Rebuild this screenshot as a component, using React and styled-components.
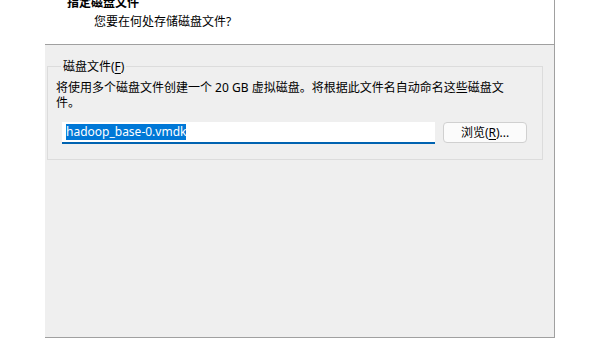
import React from 'react'
import styled, { createGlobalStyle } from 'styled-components'

const GlobalStyle = createGlobalStyle`
  html, body {
    margin: 0;
    padding: 0;
    background: #ffffff;
    overflow: hidden;
  }
  body {
    font-family: "Noto Sans", "Noto Sans CJK SC", sans-serif;
    font-size: 12px;
    color: #000;
  }
`

const App = () => {
  return (
    <>
      <GlobalStyle />
      <Window>
        <Header>
          <Title>指定磁盘文件</Title>
          <Subtitle>您要在何处存储磁盘文件?</Subtitle>
        </Header>
        <Panel>
          <Group>
            <Legend>磁盘文件(<u>F</u>)</Legend>
            <Description>
              将使用多个磁盘文件创建一个 20 GB 虚拟磁盘。将根据此文件名自动命名这些磁盘文件。
            </Description>
            <FileRow>
              <PathInput>
                <Selected>hadoop_base-0.vmdk</Selected>
              </PathInput>
              <Button>浏览(<u>R</u>)...</Button>
            </FileRow>
          </Group>
        </Panel>
      </Window>
    </>
  )
}

export default App

const Window = styled.div`
  margin-left: 45px;
  width: 509px;
  height: 338px;
  border-right: 1px solid #a0a0a0;
  display: flex;
  flex-direction: column;
`

const Header = styled.div`
  height: 45px;
  background: #ffffff;
  border-bottom: 1px solid #a0a0a0;
  padding-left: 22px;
  box-sizing: border-box;
  flex-shrink: 0;
`

const Title = styled.div`
  font-weight: bold;
  line-height: 15px;
  margin-top: -5px;
`

const Subtitle = styled.div`
  line-height: 15px;
  margin-top: 4px;
  padding-left: 27px;
`

const Panel = styled.div`
  flex: 1;
  background: #efefef;
  border-bottom: 1px solid #a0a0a0;
  padding: 14px 11px 0 2px;
`

const Group = styled.fieldset`
  margin: 0;
  padding: 0 15px 15px 8px;
  border: 1px solid #dcdcdc;
  min-inline-size: 0;
`

const Legend = styled.legend`
  margin-left: 5px;
  padding: 0 2px;
  line-height: 15px;

  u {
    text-decoration-thickness: 1px;
    text-underline-offset: 2px;
  }
`

const Description = styled.p`
  margin: 6px 0 0;
  width: 462px;
  line-height: 15px;
`

const FileRow = styled.div`
  display: flex;
  align-items: flex-start;
  gap: 8px;
  margin-top: 12px;
  padding-left: 6px;
`

const PathInput = styled.div`
  width: 374px;
  height: 22px;
  box-sizing: border-box;
  background: #ffffff;
  border-bottom: 2px solid #0063b1;
  padding: 1px 4px 0;
`

const Selected = styled.span`
  display: inline-block;
  background: #0078d7;
  color: #ffffff;
  line-height: 16px;
`

const Button = styled.button`
  width: 84px;
  height: 21px;
  box-sizing: border-box;
  border: 1px solid #d0d0d0;
  border-radius: 4px;
  background: #fbfbfb;
  font-family: inherit;
  font-size: 12px;
  color: #000;
  padding: 0;
  line-height: 18px;

  u {
    text-underline-offset: 2px;
  }
`
